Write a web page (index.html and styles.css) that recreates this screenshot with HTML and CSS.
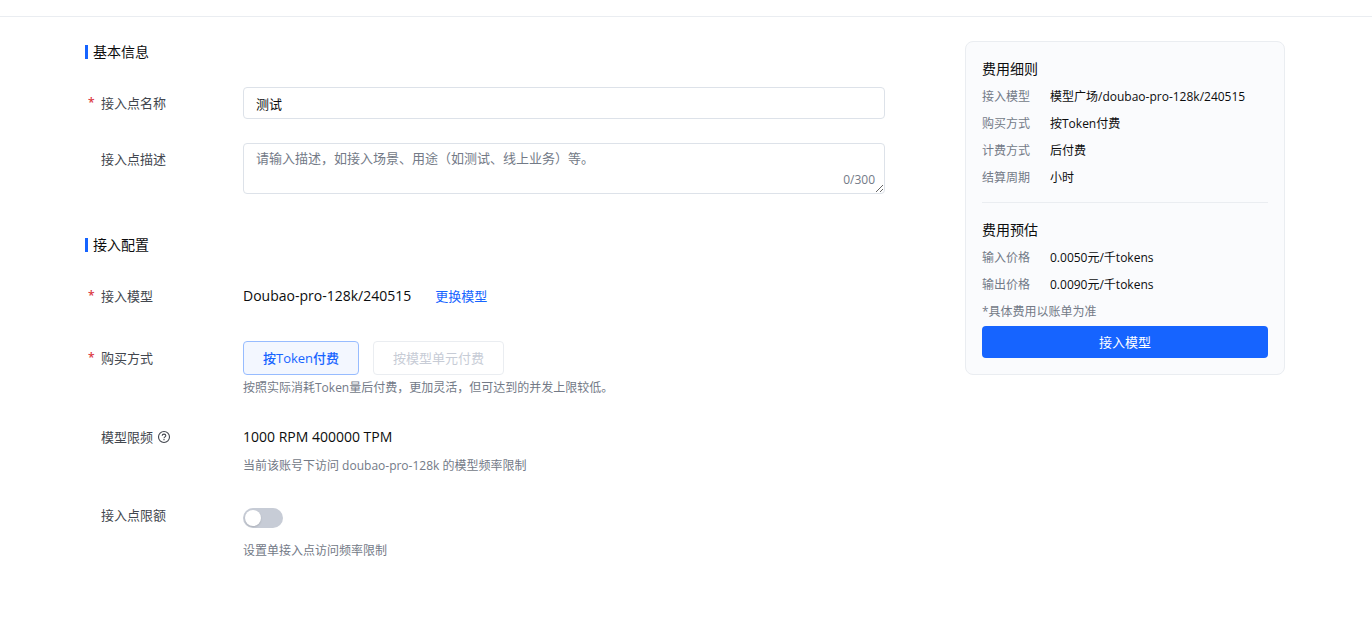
FILE: index.html
```html
<!DOCTYPE html>
<html lang="zh-CN">
<head>
<meta charset="utf-8">
<meta name="viewport" content="width=device-width, initial-scale=1">
<title>接入模型</title>
<link rel="stylesheet" href="styles.css">
</head>
<body>
<header class="topbar"></header>
<main class="page">
  <form class="form">
    <section class="section">
      <h2 class="section-title">基本信息</h2>
      <div class="row">
        <label class="label required" for="name">接入点名称</label>
        <input class="input" id="name" type="text" value="测试">
      </div>
      <div class="row">
        <label class="label" for="desc">接入点描述</label>
        <div class="textarea-wrap">
          <textarea class="input textarea" id="desc" placeholder="请输入描述，如接入场景、用途（如测试、线上业务）等。"></textarea>
          <span class="counter">0/300</span>
        </div>
      </div>
    </section>
    <section class="section">
      <h2 class="section-title">接入配置</h2>
      <div class="row row-model">
        <span class="label required">接入模型</span>
        <div class="model">
          <span class="value">Doubao-pro-128k/240515</span>
          <a class="link" href="#">更换模型</a>
        </div>
      </div>
      <div class="row">
        <span class="label label-tall required">购买方式</span>
        <div>
          <div class="options">
            <button class="option option-active" type="button">按Token付费</button>
            <button class="option" type="button" disabled>按模型单元付费</button>
          </div>
          <p class="help">按照实际消耗Token量后付费，更加灵活，但可达到的并发上限较低。</p>
        </div>
      </div>
      <div class="row">
        <span class="label">模型限频
          <svg class="icon" viewBox="0 0 14 14" fill="none" stroke="currentColor" stroke-width="1.1" aria-hidden="true">
            <circle cx="7" cy="7" r="5.5"/>
            <path d="M5.2 5.8C5.2 4.7 6 4.1 7 4.1s1.8.6 1.8 1.6C8.800 6.800 7 6.900 7 8.200"/>
            <path d="M7 9v1.200"/>
          </svg>
        </span>
        <div>
          <span class="value">1000 RPM 400000 TPM</span>
          <p class="help">当前该账号下访问 doubao-pro-128k 的模型频率限制</p>
        </div>
      </div>
      <div class="row">
        <label class="label" for="quota">接入点限额</label>
        <div class="quota">
          <input class="switch" id="quota" type="checkbox" role="switch">
          <p class="help">设置单接入点访问频率限制</p>
        </div>
      </div>
    </section>
  </form>
  <aside class="card">
    <h3 class="card-title">费用细则</h3>
    <dl class="facts">
      <dt>接入模型</dt><dd>模型广场/doubao-pro-128k/240515</dd>
      <dt>购买方式</dt><dd>按Token付费</dd>
      <dt>计费方式</dt><dd>后付费</dd>
      <dt>结算周期</dt><dd>小时</dd>
    </dl>
    <hr class="divider">
    <h3 class="card-title">费用预估</h3>
    <dl class="facts">
      <dt>输入价格</dt><dd>0.0050元/千tokens</dd>
      <dt>输出价格</dt><dd>0.0090元/千tokens</dd>
    </dl>
    <p class="note">*具体费用以账单为准</p>
    <button class="submit" type="button">接入模型</button>
  </aside>
</main>
</body>
</html>
```

FILE: styles.css
```css
* {
  box-sizing: border-box;
}

body,
h2,
h3,
p,
dl,
dd {
  margin: 0;
}

body {
  background: #fff;
  color: #0c0d0e;
  font: 13px/20px "Open Sans", "Noto Sans CJK SC", sans-serif;
}

button,
input,
textarea {
  font: inherit;
}

.topbar {
  height: 17px;
  border-bottom: 1px solid #eaedf1;
}

.page {
  display: flex;
  align-items: flex-start;
  gap: 80px;
  padding: 24px 87px 24px 85px;
}

.form {
  flex: 1;
  min-width: 0;
  display: flex;
  flex-direction: column;
  gap: 40px;
}

.section {
  display: flex;
  flex-direction: column;
  gap: 24px;
}

.section-title {
  display: flex;
  align-items: center;
  gap: 5px;
  font-size: 14px;
  line-height: 22px;
  font-weight: 400;
}

.section-title::before {
  content: "";
  width: 3px;
  height: 14px;
  background: #1664ff;
}

.row {
  display: grid;
  grid-template-columns: 143px minmax(0, 1fr);
  column-gap: 15px;
}

.row-model {
  min-height: 37px;
}

.label {
  display: flex;
  align-items: center;
  gap: 4px;
  height: 32px;
  padding-left: 16px;
  color: #42464e;
}

.label-tall {
  height: 34px;
}

.required {
  padding-left: 3px;
}

.required::before {
  content: "*";
  width: 9px;
  color: #db373f;
  font-size: 12px;
  font-weight: 600;
}

.icon {
  width: 14px;
  height: 14px;
}

.input {
  display: block;
  width: 100%;
  height: 32px;
  padding: 4px 12px;
  border: 1px solid #dde2e9;
  border-radius: 4px;
  background: #fff;
  color: #0c0d0e;
}

.textarea-wrap {
  position: relative;
}

.textarea {
  height: 51px;
  resize: vertical;
}

.textarea::placeholder {
  color: #737a87;
}

.counter {
  position: absolute;
  right: 10px;
  bottom: 4px;
  color: #737a87;
  font-size: 12px;
}

.value {
  font-size: 14px;
  line-height: 32px;
}

.model {
  display: flex;
  align-items: center;
  gap: 24px;
  height: 32px;
}

.link {
  color: #1664ff;
  text-decoration: none;
}

.options {
  display: flex;
  gap: 14px;
}

.option {
  height: 34px;
  padding: 0 19px;
  border: 1px solid #eaedf1;
  border-radius: 4px;
  background: #fff;
  color: #c7ccd6;
}

.option-active {
  border-color: #97bcff;
  background: #f3f7ff;
  color: #1664ff;
  font-weight: 500;
}

.help {
  margin-top: 4px;
  color: #737a87;
  font-size: 12px;
  line-height: 18px;
}

.quota {
  display: grid;
  gap: 10px;
  padding-top: 9px;
}

.switch {
  appearance: none;
  width: 40px;
  height: 20px;
  margin: 0;
  padding: 2px;
  border-radius: 10px;
  background: #c7ccd6;
}

.switch::before {
  content: "";
  display: block;
  width: 16px;
  height: 16px;
  border-radius: 50%;
  background: #fff;
  box-shadow: 0 1px 2px rgba(0, 0, 0, 0.15);
}

.switch:checked {
  background: #1664ff;
}

.switch:checked::before {
  margin-left: auto;
}

.card {
  width: 320px;
  padding: 16px;
  border: 1px solid #eaedf1;
  border-radius: 8px;
  background: #fafbfd;
  font-size: 12px;
}

.card-title {
  font-size: 14px;
  line-height: 22px;
  font-weight: 400;
}

.facts {
  display: grid;
  grid-template-columns: 68px 1fr;
  row-gap: 7px;
  margin-top: 7px;
}

.facts dt,
.note {
  color: #737a87;
}

.divider {
  margin: 14px 0 16px;
  border: 0;
  border-top: 1px solid #eaedf1;
}

.note {
  margin: 7px 0 4px;
}

.submit {
  display: block;
  width: 100%;
  height: 32px;
  border: 0;
  border-radius: 4px;
  background: #1664ff;
  color: #fff;
  font-size: 13px;
}
```
